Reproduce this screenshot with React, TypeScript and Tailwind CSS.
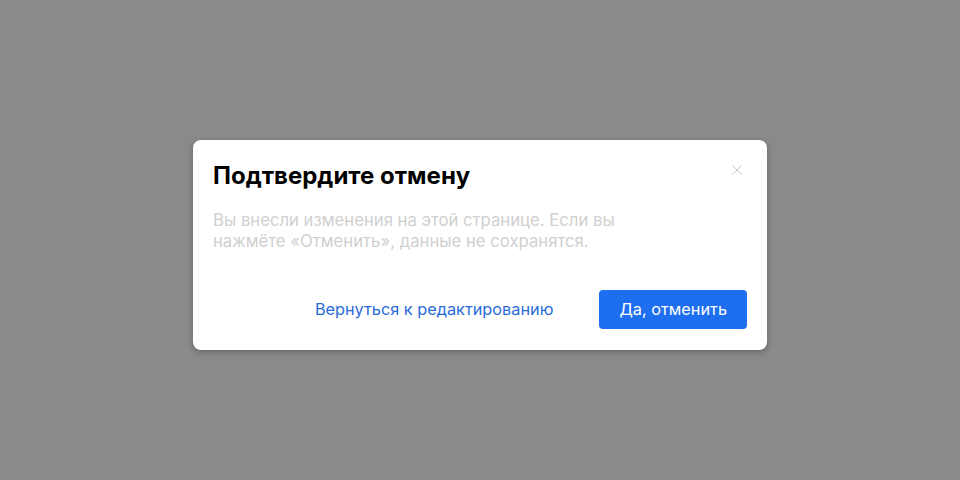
import { X } from 'lucide-react';

export default function App() {
  return (
    <div
      className="flex h-[480px] w-[960px] items-center justify-center bg-[#8a8a8a] pt-[10px]"
      style={{ fontFamily: 'Inter, "Noto Sans", sans-serif' }}
    >
      <div className="relative w-[574px] rounded-lg bg-white px-5 pt-[20px] pb-[21px] shadow-[0_2px_6px_rgba(0,0,0,0.25)]">
        <X className="absolute top-[21px] right-[21px] h-[18px] w-[18px] text-[#c4c4c4]" strokeWidth={1.3} />
        <h2 className="text-[24px] leading-[32px] font-bold text-black">Подтвердите отмену</h2>
        <p className="mt-[18px] w-[430px] text-[16.7px] leading-[21px] text-[#d0d0d0]">
          Вы внесли изменения на этой странице. Если вы нажмёте «Отменить», данные не сохранятся.
        </p>
        <div className="mt-[38px] flex items-center justify-end gap-[46px]">
          <button className="text-[16.3px] text-[#2a6bd8]">Вернуться к редактированию</button>
          <button className="h-[39px] rounded-[4px] bg-[#1d6ff0] px-5 text-[16.3px] text-white">
            Да, отменить
          </button>
        </div>
      </div>
    </div>
  );
}
